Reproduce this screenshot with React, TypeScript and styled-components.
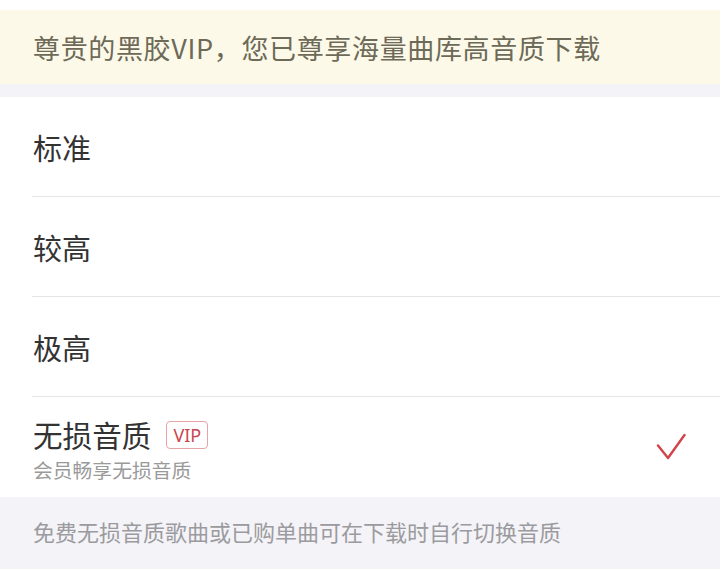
import React from 'react';
import styled, { createGlobalStyle } from 'styled-components';

const GlobalStyle = createGlobalStyle`
  html, body {
    margin: 0;
    padding: 0;
    background: #ffffff;
  }
  body {
    font-family: "Noto Sans CJK SC", "Noto Sans", sans-serif;
  }
`;

const Page = styled.div`
  width: 720px;
  height: 569px;
  padding-top: 10px;
  box-sizing: border-box;
  background: #f4f3f7;
  display: flex;
  flex-direction: column;
  overflow: hidden;
  position: relative;

  &::before {
    content: '';
    position: absolute;
    top: 0;
    left: 0;
    right: 0;
    height: 10px;
    background: #ffffff;
  }
`;

const Banner = styled.div`
  height: 74px;
  background: #fdf9e9;
  display: flex;
  align-items: center;
  padding-left: 33px;
  font-size: 27px;
  color: #6d6a58;
  letter-spacing: 0.65px;
`;

const List = styled.div`
  margin-top: 13px;
  background: #ffffff;
`;

const Row = styled.div`
  padding-left: 32px;
  height: 100px;
  box-sizing: border-box;
`;

const RowInner = styled.div<{ $last?: boolean }>`
  height: 100%;
  box-sizing: border-box;
  display: flex;
  align-items: center;
  justify-content: space-between;
  padding-right: 34px;
  border-bottom: ${(p) => (p.$last ? 'none' : '1px solid #e6e6e8')};
`;

const Label = styled.div<{ $big?: boolean }>`
  font-size: ${(p) => (p.$big ? '29.6px' : '29px')};
  color: #333333;
  line-height: 38px;
  padding-left: 1px;
  display: flex;
  align-items: center;
`;

const TextBlock = styled.div`
  display: flex;
  flex-direction: column;
  gap: 2px;
  padding-top: 5px;
`;

const Sub = styled.div`
  font-size: 19.8px;
  line-height: 28px;
  color: #9a9a9a;
  padding-left: 1px;
`;

const VipBadge = styled.span`
  margin-left: 15px;
  width: 42px;
  height: 28px;
  box-sizing: border-box;
  border: 1px solid #e6a3a8;
  border-radius: 4px;
  color: #c8474f;
  font-family: "Noto Sans", "Liberation Sans", sans-serif;
  font-size: 18px;
  line-height: 26px;
  text-align: center;
`;

const Footer = styled.div`
  flex: 1;
  display: flex;
  align-items: center;
  padding-left: 33px;
  padding-bottom: 4px;
  font-size: 22px;
  color: #9b9b9f;
`;

const Check = () => (
  <svg width="30" height="30" viewBox="0 0 30 30" fill="none">
    <path
      d="M2 13.5 L12 26 L28.5 3"
      stroke="#d2444b"
      strokeWidth="2.4"
      strokeLinecap="round"
      strokeLinejoin="round"
    />
  </svg>
);

const options = ['标准', '较高', '极高'];

export default function App() {
  return (
    <>
      <GlobalStyle />
      <Page>
        <Banner>尊贵的黑胶VIP，您已尊享海量曲库高音质下载</Banner>
        <List>
          {options.map((o) => (
            <Row key={o}>
              <RowInner>
                <Label>{o}</Label>
              </RowInner>
            </Row>
          ))}
          <Row>
            <RowInner $last>
              <TextBlock>
                <Label $big>
                  无损音质<VipBadge>VIP</VipBadge>
                </Label>
                <Sub>会员畅享无损音质</Sub>
              </TextBlock>
              <Check />
            </RowInner>
          </Row>
        </List>
        <Footer>免费无损音质歌曲或已购单曲可在下载时自行切换音质</Footer>
      </Page>
    </>
  );
}
